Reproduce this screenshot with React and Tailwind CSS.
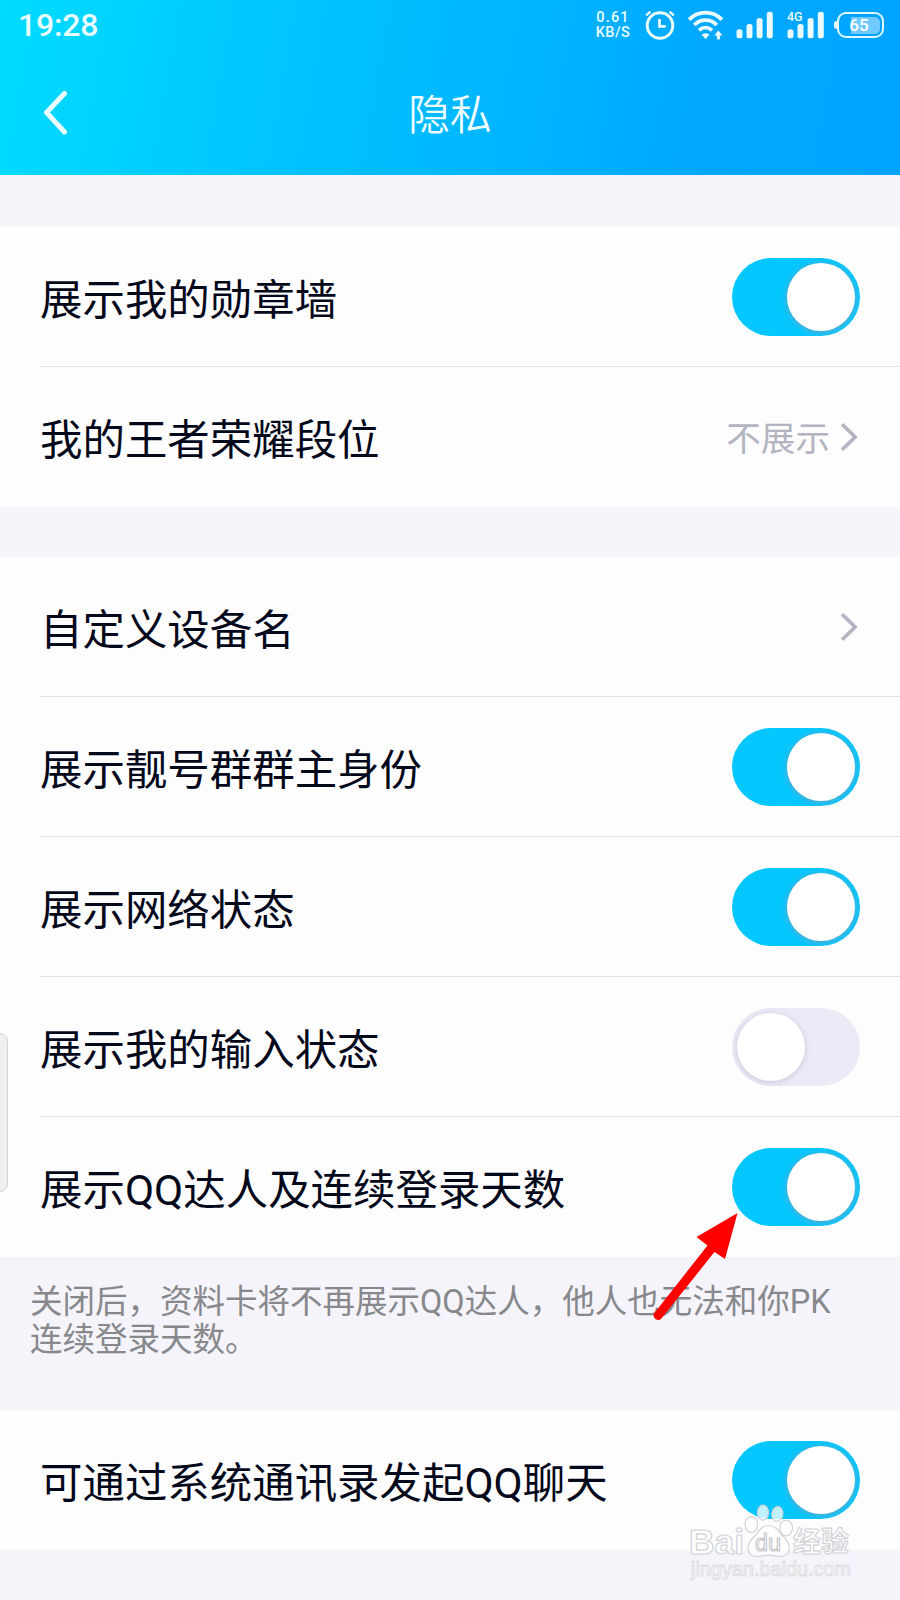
const FONT = "font-[Roboto,'Noto_Sans_CJK_SC',sans-serif]";

function Toggle({ on = true }) {
  return (
    <div
      role="switch"
      aria-checked={on}
      className={`flex h-[78px] w-32 shrink-0 items-center overflow-hidden rounded-full px-[5px] ${on ? "justify-end bg-[#04c7ff]" : "justify-start bg-[#ebebf8]"}`}
    >
      <div
        className={`size-[68px] rounded-full bg-white ${on ? "shadow-[0_1px_6px_rgba(150,150,170,0.75)]" : "shadow-[0_1px_6px_rgba(120,120,150,0.35)]"}`}
      />
    </div>
  );
}

function Chevron() {
  return (
    <svg className="mr-[2px] h-8 w-[18px] shrink-0" viewBox="0 0 18 32" fill="none" stroke="#b3b4c2" strokeWidth="3.6">
      <path d="M2 3.2 15.2 16 2 28.8" />
    </svg>
  );
}

function Row({ label, last = false, children }) {
  return (
    <div className="h-[140px] pl-10">
      <div className={`flex h-full items-center justify-between pr-10 ${last ? "" : "border-b border-[#e2e2e5]"}`}>
        <span className="whitespace-nowrap pt-[9px] text-[42.45px] leading-none text-[#03081a]">{label}</span>
        {children}
      </div>
    </div>
  );
}

function Signal() {
  return (
    <svg className="h-[28px] w-[38px]" viewBox="0 0 38 28" fill="#e9fbff">
      <rect x="0.5" y="18.3" width="6" height="9" rx="2.6" />
      <rect x="10.5" y="13" width="6" height="14.3" rx="2.6" />
      <rect x="20.6" y="7" width="6" height="20.3" rx="2.6" />
      <rect x="30.8" y="0.8" width="6" height="26.5" rx="2.6" />
    </svg>
  );
}

function StatusBar() {
  return (
    <div className="flex h-[50px] items-center justify-between pl-[18px] pr-4 text-[#e9fbff]">
      <span className="text-[32px] font-medium leading-none tracking-[-0.2px]">19:28</span>
      <div className="flex items-center">
        <div className="mr-[14px] w-[36px] text-center text-[14.5px] font-medium leading-[15px] whitespace-nowrap">
          <div className="tracking-[1.2px]">0.61</div>
          <div className="tracking-[0.4px]">KB/S</div>
        </div>
        <svg className="mr-[13px] h-[30px] w-[30px]" viewBox="0 0 30 30" fill="none" stroke="#e9fbff" strokeWidth="3">
          <circle cx="15" cy="15.5" r="12.8" />
          <path d="M14.5 9v7.4h6.2" strokeWidth="2.8" />
          <path d="M1.2 5.4 5.4 1.6M28.8 5.4 24.6 1.6" strokeWidth="2.4" />
        </svg>
        <svg className="mr-[13px] h-[30px] w-[35px]" viewBox="0 0 35 30" fill="none" stroke="#e9fbff" strokeWidth="3.8">
          <path d="M1.2 9.6C10 .2 25 .2 33.8 9.6" />
          <path d="M6.2 15c6.6-6.5 16-6.5 22.6 0" />
          <path d="M11 20.4c4-3.8 9-3.8 13 0" />
          <path d="M13.6 24.8c2.4-2 5.4-2 7.8 0L17.5 29z" fill="#e9fbff" stroke="none" />
          <path d="M30.4 29.4v-5" strokeWidth="3" />
          <path d="M26.2 25.6 30.4 20.4l4.2 5.2z" fill="#e9fbff" stroke="none" />
        </svg>
        <Signal />
        <div className="relative ml-[13px] mr-[9px] h-[28px]">
          <Signal />
          <span className="absolute left-0 top-0 text-[12.5px] font-medium leading-none">4G</span>
        </div>
        <div className="flex items-center">
          <div className="h-[8px] w-[3px] rounded-l-full bg-[#e9fbff]" />
          <div className="flex h-[26px] w-[47px] items-center justify-center rounded-[9px] border-[2.5px] border-[#e0f8ff] p-[2px]">
            <div className="flex h-[17px] w-full items-center justify-center rounded-[5px] bg-linear-to-r from-transparent from-25% to-[#70caff] to-25%">
              <span className="pr-[3px] pt-px text-[17px] font-medium leading-none text-white">65</span>
            </div>
          </div>
        </div>
      </div>
    </div>
  );
}

function Watermark() {
  return (
    <svg className="absolute left-[684px] top-[1501px] h-[84px] w-[172px]" viewBox="0 0 172 84">
      <g fill="#ffffff" fillOpacity="0.75" stroke="#d2d2d7" strokeWidth="1.2" strokeLinejoin="round">
        <text x="5" y="53" fontFamily="Liberation Sans, sans-serif" fontWeight="700" fontSize="35" textLength="55" lengthAdjust="spacingAndGlyphs">Bai</text>
        <ellipse cx="67.3" cy="23.5" rx="6.3" ry="7.8" />
        <ellipse cx="79" cy="11.6" rx="5.5" ry="7.5" />
        <ellipse cx="93.3" cy="13" rx="5.5" ry="7.5" transform="rotate(8 93.3 13)" />
        <ellipse cx="102.2" cy="27" rx="6.3" ry="7.8" />
        <path d="M84.5 24.5c6 0 9 4 12.5 8.5 4 4.5 8.5 8 8.5 14 0 5-4 8.5-9 8.5-4.5 0-7-1.3-12-1.3s-7.5 1.3-12 1.3c-5 0-8.5-3.5-8.5-8.5 0-6 4.5-9.5 8.5-14 3.5-4.5 6-8.5 12-8.5z" />
        <text x="71" y="50" fontFamily="Liberation Sans, sans-serif" fontSize="23" textLength="26" lengthAdjust="spacingAndGlyphs" stroke="#c8c8cd">du</text>
        <text x="109" y="51" fontFamily="Noto Sans CJK SC, sans-serif" fontWeight="700" fontSize="28" textLength="56" lengthAdjust="spacingAndGlyphs">经验</text>
        <text x="7" y="75" fontFamily="Liberation Sans, sans-serif" fontSize="19.5" textLength="160" lengthAdjust="spacingAndGlyphs" stroke="#dcdce0" strokeWidth="0.9">jingyan.baidu.com</text>
      </g>
    </svg>
  );
}

export default function App() {
  return (
    <div className={`relative h-[1600px] w-[900px] overflow-hidden bg-[#f4f4fa] ${FONT}`}>
      <header className="h-[175px] bg-[linear-gradient(100deg,#00dcff_0%,#00c1ff_36%,#00a8ff_78%,#00a3ff_100%)]">
        <StatusBar />
        <div className="grid h-[125px] grid-cols-3 items-center">
          <svg className="ml-[42px] h-[46px] w-[26px]" viewBox="0 0 26 46" fill="none" stroke="#e9fbff" strokeWidth="5" strokeLinecap="round" strokeLinejoin="round">
            <path d="M22.5 3.5 4.5 22.5 22.5 42" />
          </svg>
          <h1 className="pt-[6px] text-center text-[41.8px] font-[350] leading-none text-[#effcff]">隐私</h1>
        </div>
      </header>

      <section className="mt-[52px] bg-[#fdfdfe]">
        <Row label="展示我的勋章墙"><Toggle /></Row>
        <Row label="我的王者荣耀段位" last>
          <div className="flex items-center gap-[10px]">
            <span className="pt-[4px] text-[34.6px] leading-none text-[#b3b4c0]">不展示</span>
            <Chevron />
          </div>
        </Row>
      </section>

      <section className="mt-[50px] bg-[#fdfdfe]">
        <Row label="自定义设备名"><Chevron /></Row>
        <Row label="展示靓号群群主身份"><Toggle /></Row>
        <Row label="展示网络状态"><Toggle /></Row>
        <Row label="展示我的输入状态"><Toggle on={false} /></Row>
        <Row label="展示QQ达人及连续登录天数" last><Toggle /></Row>
      </section>

      <p className="h-[153px] whitespace-nowrap pl-[30px] pt-[26px] text-[32.5px] leading-[38px] text-[#87888c]">
        关闭后，资料卡将不再展示QQ达人，他人也无法和你PK
        <br />
        连续登录天数。
      </p>

      <section className="bg-[#fdfdfe]">
        <Row label="可通过系统通讯录发起QQ聊天" last><Toggle /></Row>
      </section>

      <div className="absolute -left-2 top-[1033px] h-[159px] w-4 rounded-[8px] border-[1.5px] border-[#d2d2d4] bg-[#efeef0]" />

      <svg className="absolute left-[650px] top-[1210px] h-[115px] w-[92px]" viewBox="0 0 92 115" fill="#fe0000">
        <path d="M87.5 3 46.5 27 57.5 35.5 4 103.5A4.6 4.6 0 0 0 11 109L64.5 42 75 49z" />
      </svg>

      <Watermark />
    </div>
  );
}
